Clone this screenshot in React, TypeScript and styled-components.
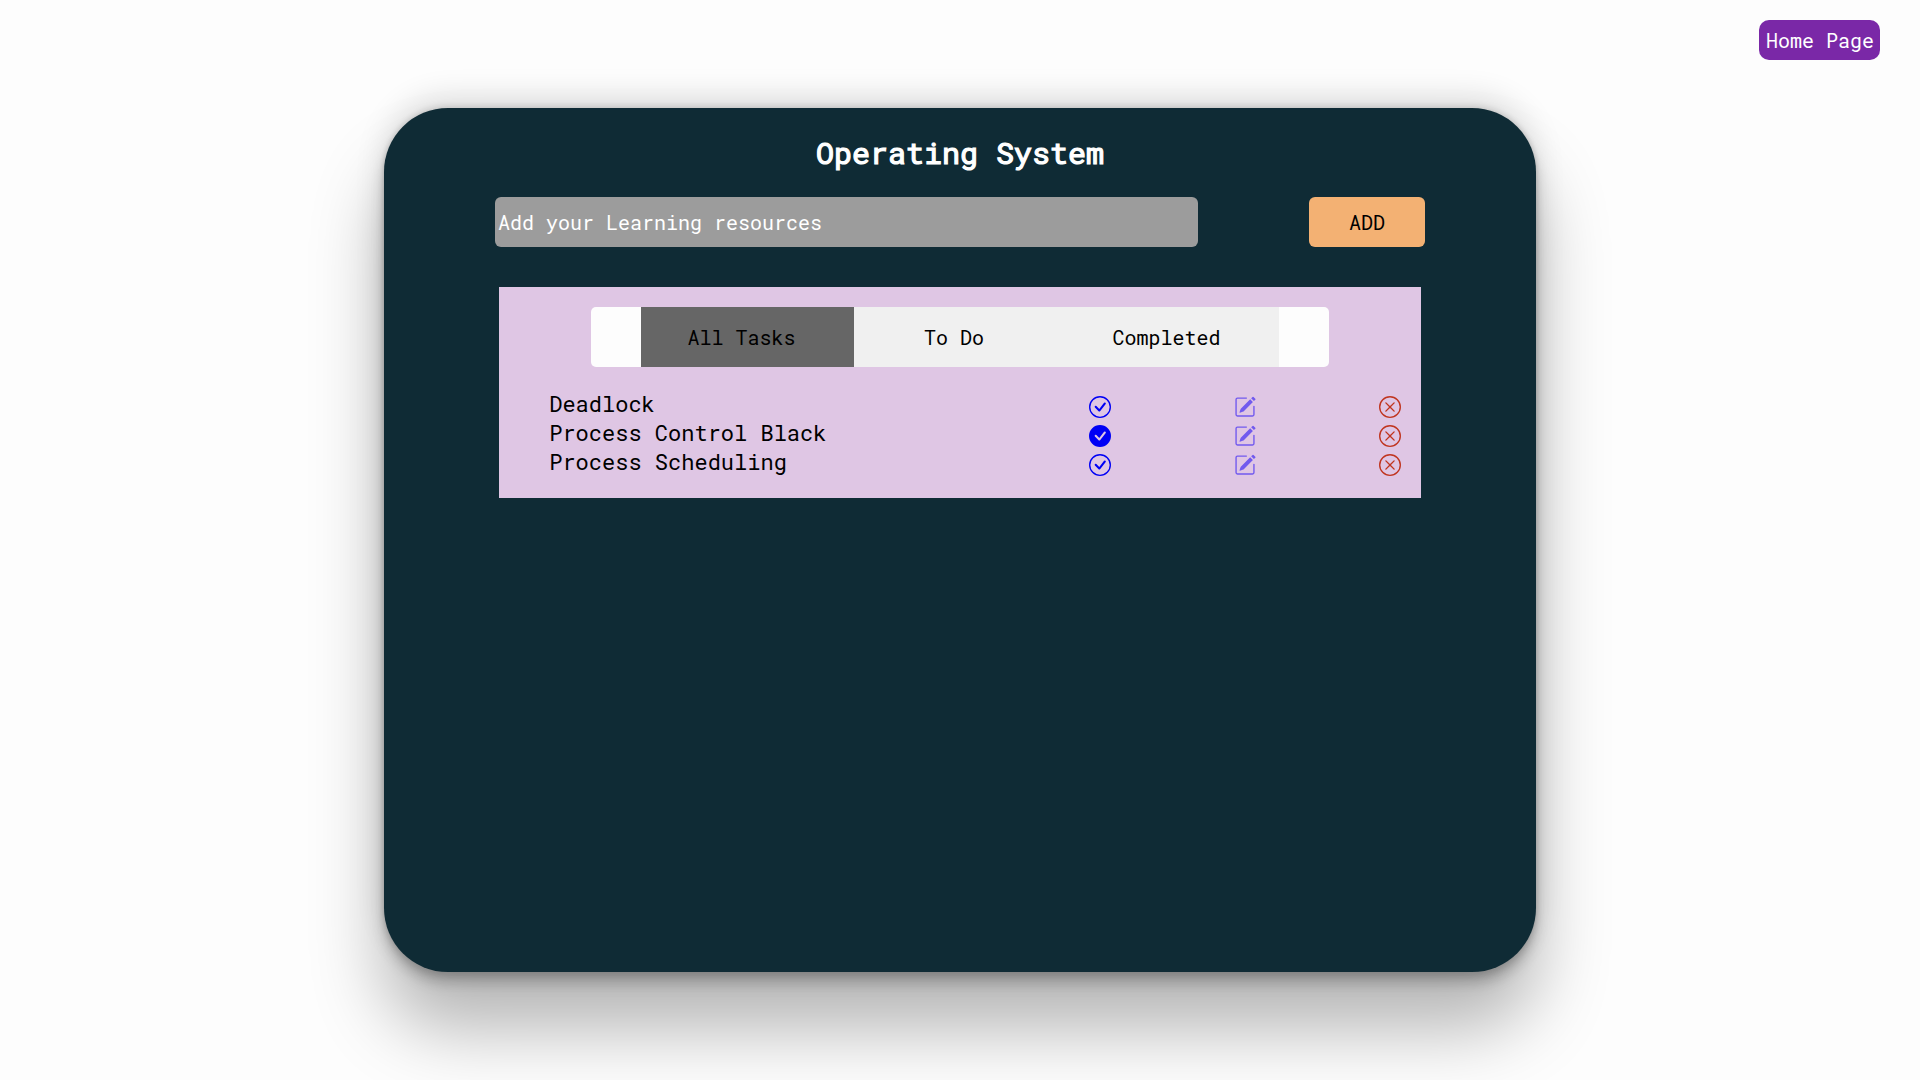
import React from "react";
import styled, { createGlobalStyle } from "styled-components";
import { BsCheckCircle, BsCheckCircleFill, BsPencilSquare, BsXCircle } from "react-icons/bs";

const mono = `"Roboto Mono", "DejaVu Sans Mono", "Liberation Mono", monospace`;

const GlobalStyle = createGlobalStyle`
  * { box-sizing: border-box; }
  body { margin: 0; background: #fdfdfd; font-family: ${mono}; }
  input, button { font-family: ${mono}; }
`;

const Page = styled.div`
  height: 100vh;
  display: flex;
  flex-direction: column;
  align-items: center;
  overflow: hidden;
`;

const TopBar = styled.header`
  width: 100%;
  height: 108px;
  flex: none;
  padding: 20px 40px 0 0;
  display: flex;
  justify-content: flex-end;
  align-items: flex-start;
`;

const HomeButton = styled.button`
  height: 40px;
  width: 121px;
  padding: 0 0 0 1px;
  border: 0;
  border-radius: 10px;
  background: #7a28a7;
  color: #fff;
  font-size: 20px;
`;

const Card = styled.main`
  width: 60%;
  height: 864px;
  flex: none;
  border-radius: 64px;
  background: #0f2b35;
  padding-top: 25px;
  display: flex;
  flex-direction: column;
  align-items: center;
  box-shadow:
    rgba(0, 0, 0, 0.29) 0 56px 72px,
    rgba(0, 0, 0, 0.12) 0 -12px 30px,
    rgba(0, 0, 0, 0.12) 0 4px 6px,
    rgba(0, 0, 0, 0.17) 0 12px 13px,
    rgba(0, 0, 0, 0.09) 0 -3px 5px;
`;

const Title = styled.h1`
  margin: 0;
  height: 40px;
  line-height: 40px;
  font-size: 30px;
  font-weight: 400;
  -webkit-text-stroke: 1.2px #fff;
  color: #fff;
`;

const Form = styled.div`
  margin-top: 24px;
  width: 930px;
  height: 50px;
  display: flex;
  justify-content: space-between;
`;

const Field = styled.input`
  width: 703px;
  border: 0;
  border-radius: 6px;
  padding: 2px 3px;
  background: #9c9c9c;
  color: #fff;
  font-size: 20px;
  &::placeholder { color: #fff; opacity: 1; }
`;

const AddButton = styled.button`
  width: 116px;
  padding: 0;
  border: 0;
  border-radius: 6px;
  background: #f3b173;
  color: #000;
  font-size: 20px;
`;

const Panel = styled.section`
  margin-top: 40px;
  width: 80%;
  padding: 20px 0;
  background: #dfc6e4;
  display: flex;
  flex-direction: column;
  align-items: center;
`;

const Tabs = styled.nav`
  width: 80%;
  height: 60px;
  padding: 0 50px;
  border-radius: 5px;
  background: #fdfdfd;
  display: flex;
`;

const Tab = styled.button<{ $active?: boolean }>`
  flex: 1;
  border: 0;
  padding: 0 12px 0 0;
  background: ${(p) => (p.$active ? "#666" : "#f0f0f0")};
  color: #000;
  font-size: 20px;
`;

const List = styled.ul`
  list-style: none;
  margin: 24px 0 0;
  padding: 0 20px 0 50px;
  width: 100%;
`;

const Item = styled.li`
  height: 29px;
  display: flex;
  justify-content: space-between;
`;

const Name = styled.span`
  font-size: 22px;
  line-height: 25px;
  color: #000;
`;

const Actions = styled.div`
  width: 312px;
  padding-top: 5px;
  display: flex;
  justify-content: space-between;
  font-size: 22px;
`;

const Action = styled.span<{ $color: string }>`
  display: flex;
  height: 22px;
  color: ${(p) => p.$color};
`;

const tabs = ["All Tasks", "To Do", "Completed"];

const tasks = [
  { name: "Deadlock", done: false },
  { name: "Process Control Black", done: true },
  { name: "Process Scheduling", done: false },
];

export default function App() {
  return (
    <>
      <GlobalStyle />
      <Page>
        <TopBar>
          <HomeButton>Home Page</HomeButton>
        </TopBar>
        <Card>
          <Title>Operating System</Title>
          <Form>
            <Field placeholder="Add your Learning resources" />
            <AddButton>ADD</AddButton>
          </Form>
          <Panel>
            <Tabs>
              {tabs.map((t, i) => (
                <Tab key={t} $active={i === 0}>{t}</Tab>
              ))}
            </Tabs>
            <List>
              {tasks.map((t) => (
                <Item key={t.name}>
                  <Name>{t.name}</Name>
                  <Actions>
                    <Action $color="#0000f5">{t.done ? <BsCheckCircleFill /> : <BsCheckCircle />}</Action>
                    <Action $color="#715aee"><BsPencilSquare /></Action>
                    <Action $color="#c0351f"><BsXCircle /></Action>
                  </Actions>
                </Item>
              ))}
            </List>
          </Panel>
        </Card>
      </Page>
    </>
  );
}
